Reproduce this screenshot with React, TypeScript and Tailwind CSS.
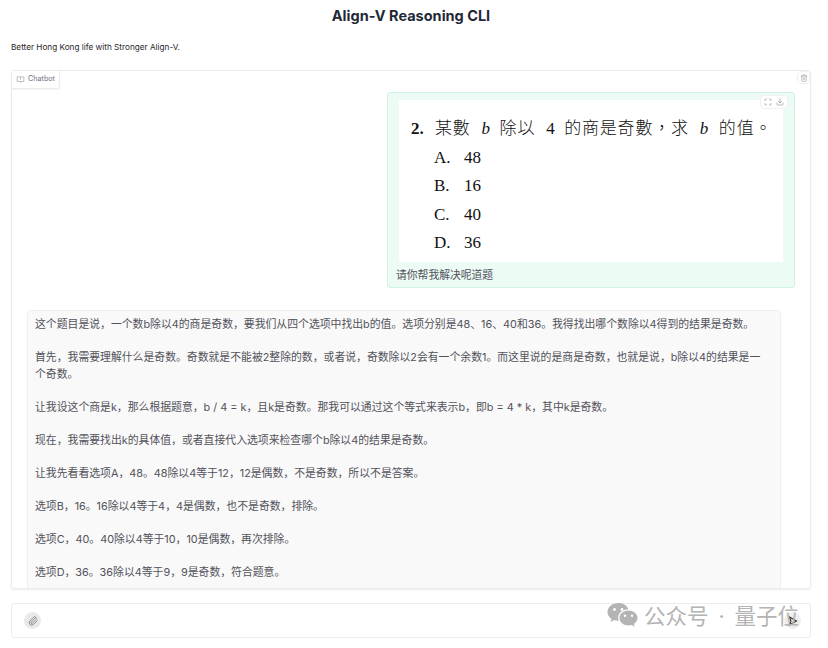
import { Maximize, Download, Trash2, Paperclip } from 'lucide-react';

const paragraphs = [
  '这个题目是说，一个数b除以4的商是奇数，要我们从四个选项中找出b的值。选项分别是48、16、40和36。我得找出哪个数除以4得到的结果是奇数。',
  '首先，我需要理解什么是奇数。奇数就是不能被2整除的数，或者说，奇数除以2会有一个余数1。而这里说的是商是奇数，也就是说，b除以4的结果是一个奇数。',
  '让我设这个商是k，那么根据题意，b / 4 = k，且k是奇数。那我可以通过这个等式来表示b，即b = 4 * k，其中k是奇数。',
  '现在，我需要找出k的具体值，或者直接代入选项来检查哪个b除以4的结果是奇数。',
  '让我先看看选项A，48。48除以4等于12，12是偶数，不是奇数，所以不是答案。',
  '选项B，16。16除以4等于4，4是偶数，也不是奇数，排除。',
  '选项C，40。40除以4等于10，10是偶数，再次排除。',
  '选项D，36。36除以4等于9，9是奇数，符合题意。',
];

const options = [
  ['A.', '48'],
  ['B.', '16'],
  ['C.', '40'],
  ['D.', '36'],
];

function QuestionImage() {
  return (
    <div className="relative h-[162px] bg-white pl-[12px] pt-[17px] text-[#111] font-['Liberation_Serif','Noto_Sans_CJK_TC',serif] text-[17px] leading-[24px]">
      <div className="flex items-center whitespace-nowrap font-light">
        <span className="w-[24px] font-bold">2.</span>
        <span className="tracking-[0.8px]">某數</span>
        <i className="ml-[11px] w-[18px]">b</i>
        <span className="tracking-[0.8px]">除以</span>
        <span className="ml-[11px] w-[18px]">4</span>
        <span className="tracking-[0.8px]">的商是奇數，求</span>
        <i className="ml-[11px] w-[19px]">b</i>
        <span className="tracking-[0.8px]">的值。</span>
      </div>
      <div className="mt-[5px] ml-[23px] flex flex-col gap-[4.300px]">
        {options.map(([letter, value]) => (
          <div key={letter} className="flex">
            <span className="w-[30px]">{letter}</span>
            <span>{value}</span>
          </div>
        ))}
      </div>
      <div className="absolute right-[-5px] top-[-5px] flex h-[14px] w-[28px] items-center justify-center gap-[4px] rounded-sm border border-[#f0f0f0] bg-white text-[#777]">
        <Maximize size={8} strokeWidth={1.5} />
        <Download size={8} strokeWidth={1.5} />
      </div>
    </div>
  );
}

function WeChatMark() {
  return (
    <svg width="31" height="25" viewBox="0 0 31 25" className="text-[#b4b4b4]" fill="currentColor">
      <path d="M11.5 0C5.2 0 .5 4 .5 9c0 2.8 1.5 5.2 3.9 6.9L3.5 19l3.6-1.9c1.2.4 2.6.6 4 .6h.7c-.4-1-.6-2-.6-3 0-4.800 4.500-8.400 10.300-8.500C20.200 2.700 16.200 0 11.500 0z" />
      <path d="M21.500 7.500c-5 0-9 3.300-9 7.500s4 7.500 9 7.500c1.100 0 2.200-.2 3.200-.5l3 1.700-.8-2.700c2.200-1.400 3.600-3.600 3.600-6 0-4.200-4-7.500-9-7.500z" />
      <circle cx="7.500" cy="6.500" r="1.400" fill="#fff" />
      <circle cx="15" cy="6.500" r="1.400" fill="#fff" />
      <circle cx="18" cy="12.800" r="1.200" fill="#fff" />
      <circle cx="25" cy="12.800" r="1.200" fill="#fff" />
    </svg>
  );
}

export default function App() {
  return (
    <div className="relative h-[648px] w-[828px] overflow-hidden bg-white font-['Inter','Noto_Sans_CJK_SC',sans-serif] text-[#27272a]">
      <div className="ml-[11px] w-[800px]">
        <h1 className="pt-[6px] text-center text-[14.500px] font-bold leading-[20px] text-[#1f2937]">Align-V Reasoning CLI</h1>
        <p className="mt-[14px] text-[8.200px] leading-[14px] text-[#27272a]">Better Hong Kong life with Stronger Align-V.</p>

        <div className="relative mt-[16px] h-[519px] overflow-hidden rounded-[3px] border border-[#ececec] shadow-[0_1px_2px_rgba(0,0,0,0.08)]">
          <div className="absolute left-0 top-0 z-10 flex h-[18px] items-center gap-[3px] rounded-br-[3px] border-b border-r border-[#ececec] bg-white px-[4px] text-[7.200px] text-[#6b7280] shadow-[0_1px_2px_rgba(0,0,0,0.05)]">
            <svg width="9" height="9" viewBox="0 0 24 24" fill="none" stroke="#9ca3af" strokeWidth="1.800">
              <path d="M3 5h18v12h-8l-1 3-1-3H3z" />
              <path d="M12 5v8" />
            </svg>
            Chatbot
          </div>
          <div className="absolute right-0 top-0 z-10 flex h-[13px] w-[13px] items-center justify-center rounded-sm border border-[#efefef] bg-white text-[#8a8a8a]">
            <Trash2 size={8} strokeWidth={1.500} />
          </div>

          <div className="flex h-full flex-col pl-[15px] pr-[15px] pt-[21px]">
            <div className="flex justify-end">
              <div className="w-[408px] rounded-[3px] border border-[#cff3e2] bg-[#ecfbf4] px-[11px] pt-[7px]">
                <QuestionImage />
                <p className="-ml-[3px] pt-[6px] pb-[3px] text-[10.800px] leading-[16px] text-[#52525b]">请你帮我解决呢道题</p>
              </div>
            </div>
            <div className="mt-[22px] w-[754px] flex-none rounded-[3px] border border-[#efefef] bg-[#f9f9f9] pl-[7px] pr-[14px] pt-[5px] text-[10.850px] leading-[16.500px] text-[#52525b]">
              {paragraphs.map((text) => (
                <p key={text} className="mb-[16.500px]">{text}</p>
              ))}
            </div>
          </div>
        </div>

        <div className="mt-[14px] flex h-[35px] items-center justify-between rounded-[3px] border border-[#ececec] pl-[12px] pr-[9px]">
          <span className="flex h-[17px] w-[17px] items-center justify-center rounded-full bg-[#e9e9e9] text-[#555]">
            <Paperclip size={10} strokeWidth={1.500} />
          </span>
          <span className="flex h-[17px] w-[17px] items-center justify-center rounded-full bg-[#eeeeee]">
            <svg width="10" height="10" viewBox="0 0 10 10" fill="none" stroke="#333" strokeWidth="1.100">
              <path d="M1.500 1l7 4-7 4 1.500-4z" />
            </svg>
          </span>
        </div>
      </div>

      <div className="absolute left-[607px] top-[603px] flex items-center text-[21.500px] leading-[24px] text-[#b4b4b4] whitespace-nowrap">
        <WeChatMark />
        <span className="ml-[6px]">公众号</span>
        <span className="w-[26px] text-center">·</span>
        <span>量子位</span>
      </div>
    </div>
  );
}
